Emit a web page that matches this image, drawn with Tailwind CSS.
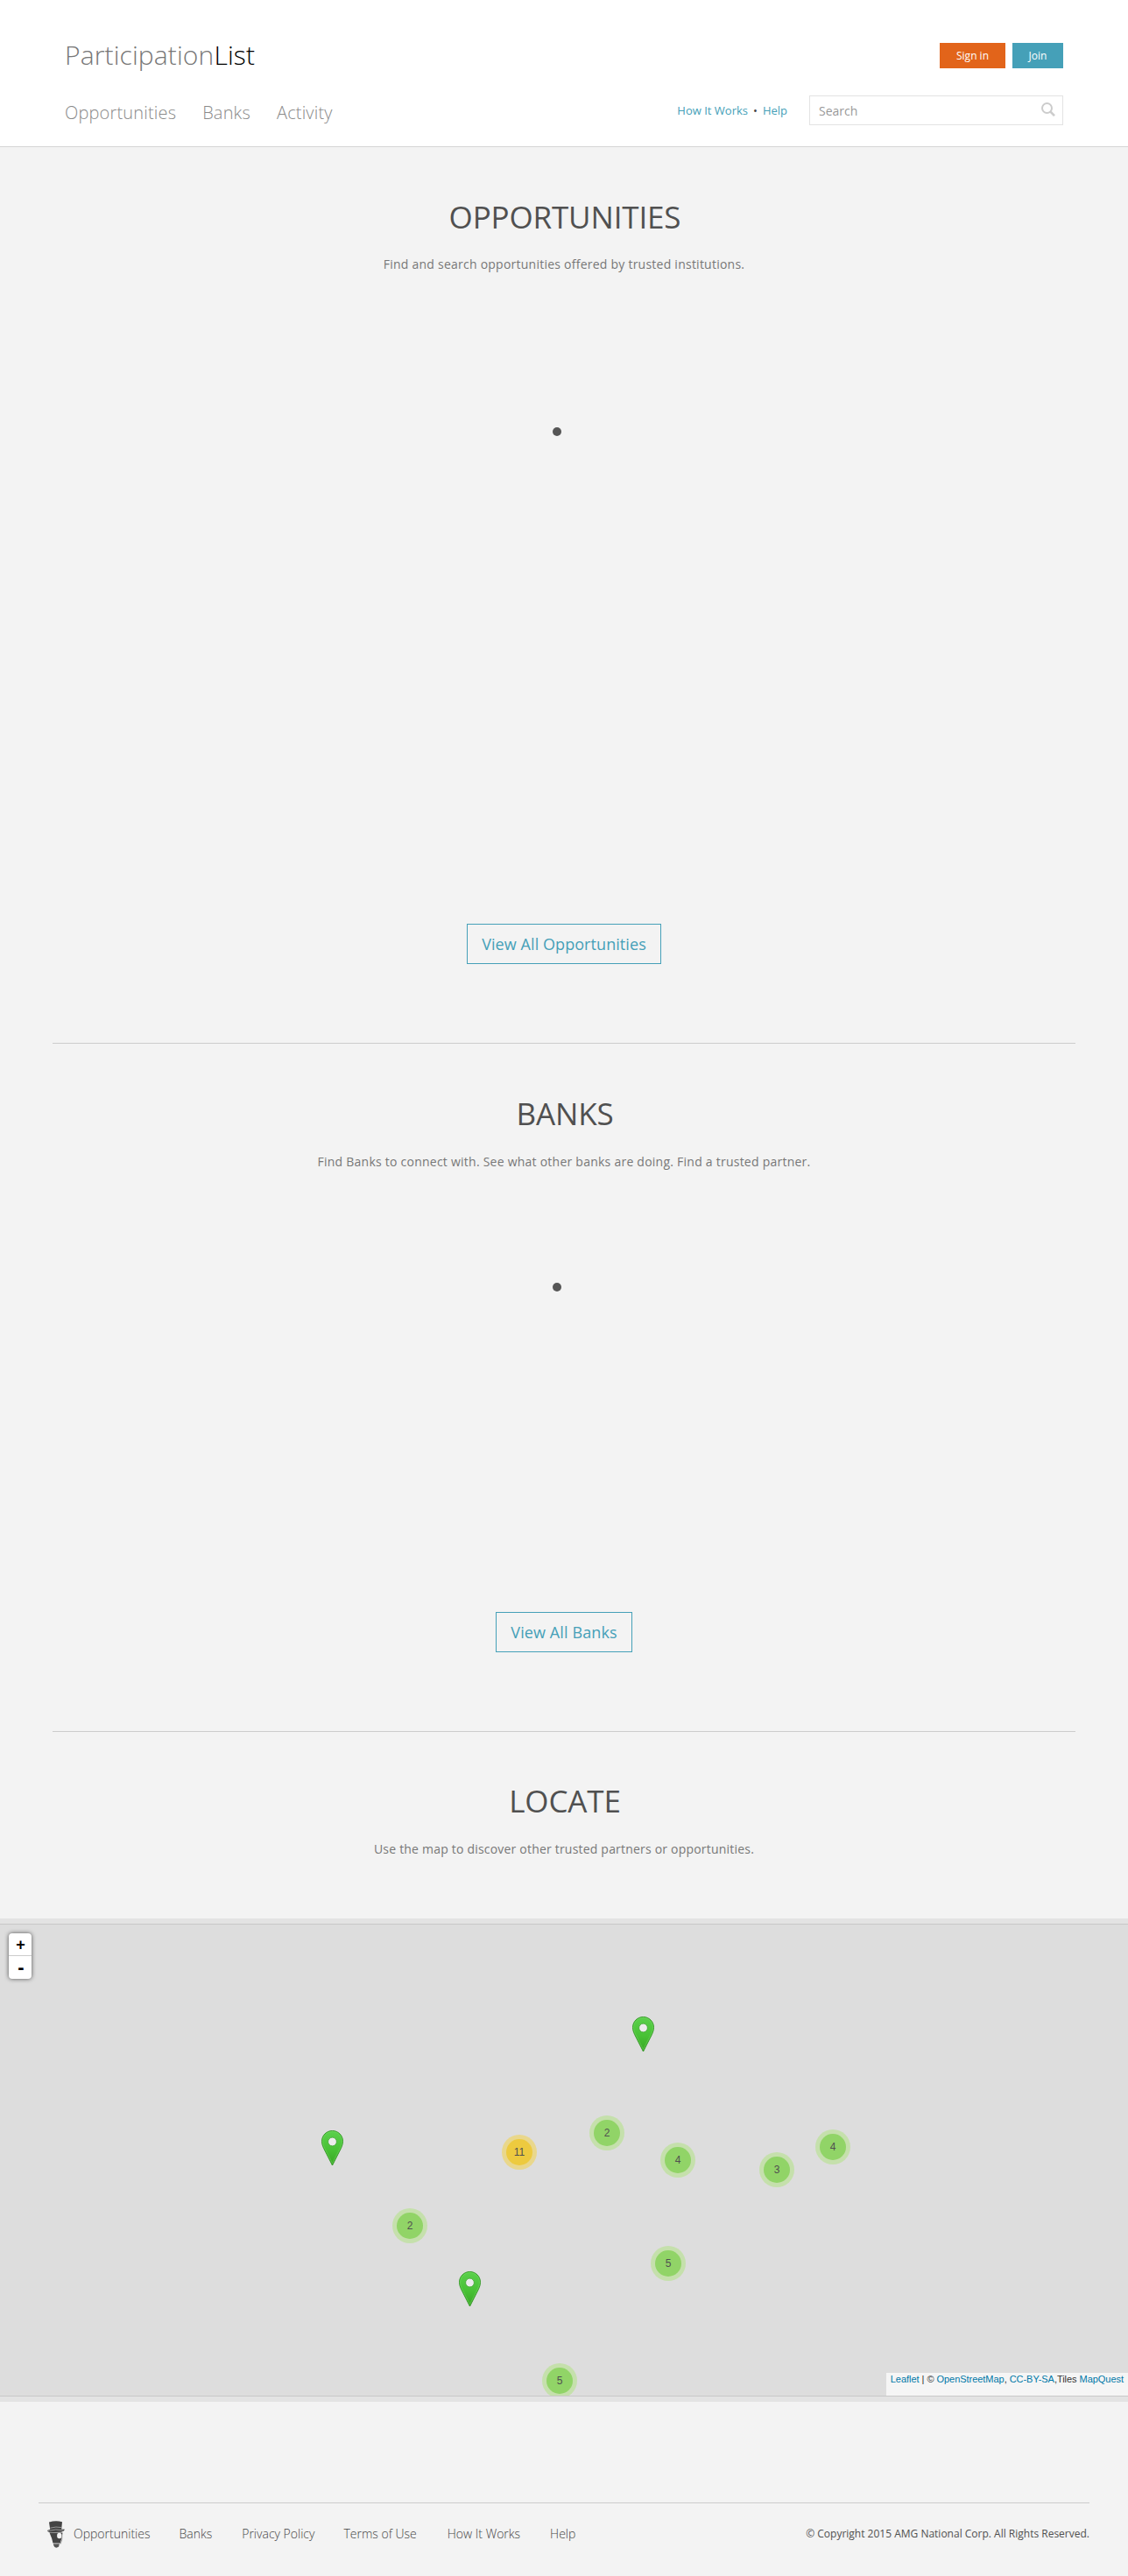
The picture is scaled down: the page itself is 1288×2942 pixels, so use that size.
<!DOCTYPE html>
<html lang="en">
<head>
<meta charset="utf-8">
<title>ParticipationList</title>
<script src="https://cdn.jsdelivr.net/npm/@tailwindcss/browser@4"></script>
</head>
<body class="bg-[#f3f3f3] font-['Open_Sans',sans-serif] text-[#505050]">
<svg class="absolute size-0" aria-hidden="true">
  <defs>
    <linearGradient id="pinFill" x1="0" y1="0" x2="0" y2="1"><stop offset="0" stop-color="#5bd04c"/><stop offset=".55" stop-color="#48c135"/><stop offset="1" stop-color="#38a524"/></linearGradient>
    <symbol id="pin" viewBox="0 0 25 41">
      <path d="M12.500.5C5.800.5.500 5.900.500 12.500c0 3 1 5.600 2.200 8.200L12.500 40 22.300 20.700c1.200-2.600 2.200-5.200 2.200-8.200C24.500 5.900 19.200.5 12.500.5z" fill="url(#pinFill)" stroke="#3a9a2c"/>
      <path d="M12.500 1.600C6.400 1.600 1.600 6.500 1.600 12.500c0 2.800.9 5.200 2.100 7.800l8.800 17.300 8.800-17.300c1.200-2.600 2.100-5 2.100-7.800 0-6-4.800-10.900-10.900-10.900z" fill="none" stroke="#7ce36c" stroke-opacity=".4"/>
      <circle cx="12.500" cy="13" r="4.900" fill="#ececec" stroke="#43a835" stroke-width=".9"/>
    </symbol>
  </defs>
</svg>

<header class="flex h-[168px] flex-col border-b border-[#d5d5d5] bg-white pl-[74px] pr-[74px]">
  <div class="flex justify-between pt-[42px]">
    <h1 class="text-[30px] leading-[42px] font-light tracking-[.12px] text-[#777]">Participation<span class="text-black">List</span></h1>
    <div class="flex gap-2 pt-[7px] text-[12px] text-white">
      <a class="flex h-[29px] w-[75px] items-center justify-center bg-[#e2641a]">Sign in</a>
      <a class="flex h-[29px] w-[58px] items-center justify-center bg-[#45a0b8]">Join</a>
    </div>
  </div>
  <div class="flex items-start justify-between pt-[25px]">
    <nav class="flex gap-[30px] pt-[6px] text-[20px] leading-[27px] font-light tracking-[.17px] text-[#8a8a8a]">
      <a>Opportunities</a><a>Banks</a><a>Activity</a>
    </nav>
    <div class="flex">
      <div class="mr-[25px] flex gap-[6px] pt-2 text-[13px] leading-[18px] text-[#45a0b8]">
        <a>How It Works</a><span class="text-[#444]">•</span><a>Help</a>
      </div>
      <div class="flex h-[34px] w-[290px] items-center justify-between border border-[#e3e3e3] pl-[10px] pr-[8px] text-[14px] text-[#999]">
        <span>Search</span>
        <svg class="mb-[2px] size-4" viewBox="0 0 16 16" fill="none" stroke="#ccc" stroke-width="2"><circle cx="6.500" cy="6.500" r="5.500"/><path d="M10.300 10.300l4.700 4.900" stroke-width="2.600"/></svg>
      </div>
    </div>
  </div>
</header>

<main>
  <section class="mx-[60px] flex h-[1024px] flex-col items-center border-b border-[#ccc] pt-[56px]">
    <h2 class="pl-[2px] text-[35px] leading-[48px] tracking-[-.15px]">OPPORTUNITIES</h2>
    <p class="mt-[19px] text-[14px] leading-[22px] tracking-[.24px] text-[#777]">Find and search opportunities offered by trusted institutions.</p>
    <div class="mt-[175px] mr-[17px] size-[10px] rounded-full bg-[#555]"></div>
    <a class="mt-[557px] flex h-[46px] w-[222px] items-center justify-center border border-[#45a0b8] text-[18px] tracking-[.07px] text-[#45a0b8]">View All Opportunities</a>
  </section>
  <section class="mx-[60px] flex h-[786px] flex-col items-center border-b border-[#ccc] pt-[56px]">
    <h2 class="pl-[2px] text-[35px] leading-[48px] tracking-[-.15px]">BANKS</h2>
    <p class="mt-[20px] text-[14px] leading-[22px] tracking-[.24px] text-[#777]">Find Banks to connect with. See what other banks are doing. Find a trusted partner.</p>
    <div class="mt-[127px] mr-[17px] size-[10px] rounded-full bg-[#555]"></div>
    <a class="mt-[366px] flex h-[46px] w-[156px] items-center justify-center border border-[#45a0b8] text-[18px] tracking-[.1px] text-[#45a0b8]">View All Banks</a>
  </section>
  <section class="flex h-[213px] flex-col items-center pt-[55px]">
    <h2 class="pl-[2px] text-[35px] leading-[48px] tracking-[-.15px]">LOCATE</h2>
    <p class="mt-[20px] text-[14px] leading-[22px] tracking-[.2px] text-[#777]">Use the map to discover other trusted partners or opportunities.</p>
  </section>

  <div class="bg-[#e3e3e3] py-[6px]">
    <div class="relative h-[540px] overflow-hidden border-y border-[#c8c8c8] bg-[#ddd] font-['Liberation_Sans',sans-serif] text-[12px]">
      <div class="absolute top-[10px] left-[10px] w-[26px] rounded-[4px] bg-white text-center font-bold text-black shadow-[0_0_5px_rgba(0,0,0,.65)]">
        <div class="h-[26px] border-b border-[#ccc] pl-px text-[18px] leading-[26px]">+</div>
        <div class="h-[26px] pl-[2px] text-[22px] leading-[26px]">-</div>
      </div>
      <svg class="absolute left-[722px] top-[105px] h-[41px] w-[25px]"><use href="#pin"/></svg>
      <svg class="absolute left-[367px] top-[235px] h-[41px] w-[25px]"><use href="#pin"/></svg>
      <svg class="absolute left-[524px] top-[396px] h-[41px] w-[25px]"><use href="#pin"/></svg>

      <div class="absolute left-[573px] top-[240px] size-10 rounded-full bg-[#f1d357]/60 p-[5px]"><div class="size-[30px] rounded-full bg-[#f0c20c]/60 text-center leading-[30px]">11</div></div>
      <div class="absolute left-[673px] top-[218px] size-10 rounded-full bg-[#b5e28c]/60 p-[5px]"><div class="size-[30px] rounded-full bg-[#6ecc39]/60 text-center leading-[30px]">2</div></div>
      <div class="absolute left-[754px] top-[249px] size-10 rounded-full bg-[#b5e28c]/60 p-[5px]"><div class="size-[30px] rounded-full bg-[#6ecc39]/60 text-center leading-[30px]">4</div></div>
      <div class="absolute left-[867px] top-[260px] size-10 rounded-full bg-[#b5e28c]/60 p-[5px]"><div class="size-[30px] rounded-full bg-[#6ecc39]/60 text-center leading-[30px]">3</div></div>
      <div class="absolute left-[931px] top-[234px] size-10 rounded-full bg-[#b5e28c]/60 p-[5px]"><div class="size-[30px] rounded-full bg-[#6ecc39]/60 text-center leading-[30px]">4</div></div>
      <div class="absolute left-[448px] top-[324px] size-10 rounded-full bg-[#b5e28c]/60 p-[5px]"><div class="size-[30px] rounded-full bg-[#6ecc39]/60 text-center leading-[30px]">2</div></div>
      <div class="absolute left-[743px] top-[367px] size-10 rounded-full bg-[#b5e28c]/60 p-[5px]"><div class="size-[30px] rounded-full bg-[#6ecc39]/60 text-center leading-[30px]">5</div></div>
      <div class="absolute left-[619px] top-[501px] size-10 rounded-full bg-[#b5e28c]/60 p-[5px]"><div class="size-[30px] rounded-full bg-[#6ecc39]/60 text-center leading-[30px]">5</div></div>

      <div class="absolute right-0 bottom-0 h-[26px] bg-white/70 px-[5px] text-[11px] leading-[15px] tracking-[-.04px] whitespace-nowrap text-[#333]"><a class="text-[#0078a8]">Leaflet</a> | © <a class="text-[#0078a8]">OpenStreetMap</a>, <a class="text-[#0078a8]">CC-BY-SA</a>,Tiles <a class="text-[#0078a8]">MapQuest</a></div>
    </div>
  </div>
</main>

<footer class="mx-[44px] mt-[115px] flex h-[84px] items-start justify-between border-t border-[#ccc] pt-[20px]">
  <div class="flex pl-[10px]">
    <svg class="h-[31px] w-[20px]" viewBox="0 0 20 31">
      <path d="M2 1.500Q10-.8 17 1.300L16.200 9.500 20 9.800Q19.500 12 16 12.800L3 13.200Q.5 13 0 11L3.200 9.800z" fill="#444"/>
      <path d="M3.300 8.200Q10 6.200 16.400 7.600M1 11.500Q10 8.800 18 10.800" stroke="#aaa" stroke-width=".8" fill="none"/>
      <path d="M2.500 13.500H17.500Q17 19 14.800 25.500H6.500Q5.500 20 2.500 13.500z" fill="#444"/>
      <ellipse cx="13.800" cy="17" rx="2.700" ry="3.200" fill="#f3f3f3"/>
      <path d="M16.800 15.500Q17.500 22 15 26.500M7 26.500l7-.7" stroke="#999" fill="none"/>
      <path d="M6.800 26.800l7-.6-.7 3.300Q10 31.800 8 29.500z" fill="#555"/>
    </svg>
    <nav class="ml-[10px] flex gap-[34px] pt-[5px] text-[14px] leading-[20px] font-light text-[#444]">
      <a class="-mr-px">Opportunities</a><a>Banks</a><a>Privacy Policy</a><a class="-ml-px mr-px">Terms of Use</a><a>How It Works</a><a>Help</a>
    </nav>
  </div>
  <p class="pt-[5px] text-[12px] leading-[20px] text-[#505050]">© Copyright 2015 AMG National Corp. All Rights Reserved.</p>
</footer>
</body>
</html>
